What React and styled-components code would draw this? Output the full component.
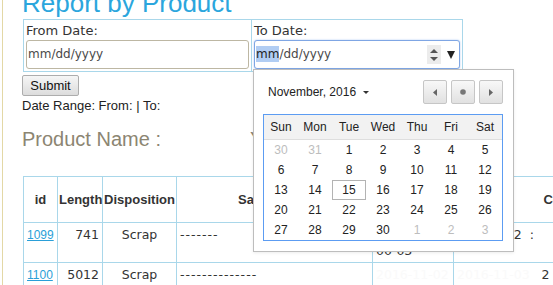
import React from 'react';
import styled, { createGlobalStyle } from 'styled-components';

const GlobalStyle = createGlobalStyle`
html, body {
margin: 0;
padding: 0;
background: #fff;
overflow: hidden;
font-family: "Liberation Sans", Arial, sans-serif;
color: #222;
}
`

const Page = styled.div`
position: relative;
margin-left: 2px;
border-left: 1px solid #e3d8a6;
padding-left: 19px;
height: 285px;
overflow: hidden;
`

const Title = styled.h2`
margin: -12px 0 0;
font-size: 26px;
line-height: 30px;
font-weight: normal;
color: #2ba6dd;
white-space: nowrap;
`

const FormTable = styled.table`
border-collapse: collapse;
margin: 1px 0 0 1px;
`

const FormCell = styled.td`
border: 1px solid #a9d7ea;
padding: 3px 2px 2px;
width: ${props => props.$width}px;
vertical-align: top;
`

const Label = styled.div`
font-family: "DejaVu Sans", Verdana, sans-serif;
font-size: 13px;
line-height: 16px;
color: #333;
`

const DateField = styled.div`
box-sizing: border-box;
display: flex;
align-items: center;
margin-top: 1px;
width: ${props => props.$width}px;
height: 29px;
padding: 0 4px 2px 1px;
border: 1px solid ${props => props.$focused ? '#7fa6e4' : '#bdb7a3'};
border-radius: 3px;
box-shadow: ${props => props.$focused ? '0 0 2px #a9c7f2' : 'none'};
background: #fff;
font-family: "DejaVu Sans", Verdana, sans-serif;
font-size: 12px;
line-height: 14px;
color: #4a4a4a;
`

const FieldText = styled.span`
flex: 1;
white-space: nowrap;
`

const Highlight = styled.span`
display: inline-block;
background: #b1cdf3;
color: #222;
line-height: 16px;
`

const SpinBox = styled.div`
display: flex;
flex-direction: column;
align-items: center;
justify-content: center;
gap: 4px;
width: 14px;
height: 19px;
margin-top: 2px;
background: #ececec;
`

const SpinArrow = styled.span`
width: 0;
height: 0;
border-left: 4px solid transparent;
border-right: 4px solid transparent;
${props => props.$up ? 'border-bottom: 4px solid #555;' : 'border-top: 4px solid #555;'}
`

const DropArrow = styled.span`
width: 0;
height: 0;
margin: 2px 0 0 6px;
border-left: 4px solid transparent;
border-right: 4px solid transparent;
border-top: 8px solid #222;
`

const SubmitButton = styled.button`
display: block;
box-sizing: border-box;
margin-top: 3px;
width: 57px;
height: 21px;
padding: 0;
border: 1px solid #adadad;
border-radius: 2px;
background: linear-gradient(#f6f6f6, #dcdcdc);
font-family: "Liberation Sans", Arial, sans-serif;
font-size: 13px;
color: #111;
`

const RangeText = styled.div`
margin-top: 2px;
font-size: 13px;
line-height: 15px;
color: #222;
`

const ProductRow = styled.div`
display: flex;
margin-top: 15px;
font-size: 20px;
line-height: 23px;
color: #8c8572;
white-space: nowrap;
`

const ProductExtra = styled.span`
margin-left: 89px;
`

const DataTable = styled.table`
border-collapse: collapse;
table-layout: fixed;
margin: 25px 0 0 1px;
width: 677px;
`

const HeadCell = styled.th`
border: 1px solid #a9d7ea;
height: 45px;
padding: 0 1px;
font-size: 13px;
font-weight: bold;
color: #333;
text-align: center;
vertical-align: middle;
white-space: nowrap;
overflow: hidden;
`

const BodyCell = styled.td`
border: 1px solid #a9d7ea;
height: 40px;
padding: 4px 3px 0;
box-sizing: border-box;
font-family: "DejaVu Sans", Verdana, sans-serif;
font-size: 12.5px;
line-height: 16px;
color: #333;
text-align: ${props => props.$align || 'left'};
vertical-align: top;
white-space: pre;
overflow: hidden;
`

const Dashes = styled.span`
letter-spacing: 1px;
`

const Faint = styled.span`
color: #fafafa;
`

const IdLink = styled.a`
font-family: "Liberation Sans", Arial, sans-serif;
font-size: 12px;
color: #2a9fd8;
text-decoration: underline;
`

const Popup = styled.div`
position: absolute;
left: 250px;
top: 69px;
box-sizing: border-box;
width: 261px;
padding: 10px 10px 10px 9px;
border: 1px solid #bdbdbd;
background: #fff;
box-shadow: 0 1px 3px rgba(0,0,0,0.08);
font-family: "Liberation Sans", Arial, sans-serif;
`

const PopHeader = styled.div`
display: flex;
align-items: center;
height: 24px;
`

const MonthTitle = styled.div`
display: flex;
align-items: center;
flex: 1;
margin-left: 5px;
font-size: 12px;
line-height: 14px;
color: #222;
`

const Caret = styled.span`
width: 0;
height: 0;
margin-left: 7px;
border-left: 3px solid transparent;
border-right: 3px solid transparent;
border-top: 3px solid #333;
`

const NavGroup = styled.div`
display: flex;
gap: 4px;
`

const NavButton = styled.div`
box-sizing: border-box;
display: flex;
align-items: center;
justify-content: center;
width: 24px;
height: 24px;
border: 1px solid #c6c6c6;
border-radius: 2px;
background: linear-gradient(#f8f8f8, #e1e1e1);
`

const Grid = styled.div`
display: grid;
grid-template-columns: repeat(7, 34px);
margin-top: 10px;
border: 1px solid #5c9cf2;
width: 238px;
`

const DayHead = styled.div`
height: 24px;
line-height: 24px;
border-bottom: 1px solid #dedede;
background: #f2f2f2;
text-align: center;
font-size: 12px;
color: #222;
`

const Day = styled.div`
box-sizing: border-box;
height: 20px;
line-height: ${props => props.$today ? '18px' : '20px'};
text-align: center;
font-size: 12px;
color: ${props => props.$muted ? '#bdbdbd' : '#222'};
border: ${props => props.$today ? '1px solid #b3b3b3' : 'none'};
`

const weekdays = ['Sun', 'Mon', 'Tue', 'Wed', 'Thu', 'Fri', 'Sat'];

const days = [
    { n: 30, muted: true }, { n: 31, muted: true },
    ...Array.from({ length: 30 }, (_, i) => ({ n: i + 1 })),
    { n: 1, muted: true }, { n: 2, muted: true }, { n: 3, muted: true },
];

const rows = [
    { id: '1099', length: '741', disp: 'Scrap', sales: '-------', date: ['2016-11-15', '00-03'], extra: '2016-11-2  :' },
    { id: '1100', length: '5012', disp: 'Scrap', sales: '--------------', date: null, extra: null },
];

function Calendar() {
    return (
        <Popup>
            <PopHeader>
                <MonthTitle>
                    November, 2016
                    <Caret />
                </MonthTitle>
                <NavGroup>
                    <NavButton>
                        <svg width="4" height="7" viewBox="0 0 4 7"><path d="M4 0 L0 3.5 L4 7 Z" fill="#666" /></svg>
                    </NavButton>
                    <NavButton>
                        <svg width="6" height="6" viewBox="0 0 6 6"><circle cx="3" cy="3" r="2.8" fill="#777" /></svg>
                    </NavButton>
                    <NavButton>
                        <svg width="4" height="7" viewBox="0 0 4 7"><path d="M0 0 L4 3.5 L0 7 Z" fill="#666" /></svg>
                    </NavButton>
                </NavGroup>
            </PopHeader>
            <Grid>
                {weekdays.map(d => <DayHead key={d}>{d}</DayHead>)}
                {days.map((d, i) => (
                    <Day key={i} $muted={d.muted} $today={!d.muted && d.n === 15}>{d.n}</Day>
                ))}
            </Grid>
        </Popup>
    )
}

export default function App() {
    return (
        <>
            <GlobalStyle />
            <Page>
                <Title>Report by Product</Title>
                <FormTable>
                    <tbody>
                        <tr>
                            <FormCell $width={222}>
                                <Label>From Date:</Label>
                                <DateField $width={223}>
                                    <FieldText>mm/dd/yyyy</FieldText>
                                </DateField>
                            </FormCell>
                            <FormCell $width={203}>
                                <Label>To Date:</Label>
                                <DateField $width={206} $focused>
                                    <FieldText><Highlight>mm</Highlight>/dd/yyyy</FieldText>
                                    <SpinBox>
                                        <SpinArrow $up />
                                        <SpinArrow />
                                    </SpinBox>
                                    <DropArrow />
                                </DateField>
                            </FormCell>
                        </tr>
                    </tbody>
                </FormTable>
                <SubmitButton type="button">Submit</SubmitButton>
                <RangeText>Date Range: From: | To:</RangeText>
                <ProductRow>
                    Product Name :
                    <ProductExtra>Y</ProductExtra>
                </ProductRow>
                <DataTable>
                    <colgroup>
                        <col style={{ width: 34 }} />
                        <col style={{ width: 45 }} />
                        <col style={{ width: 74 }} />
                        <col style={{ width: 196 }} />
                        <col style={{ width: 81 }} />
                        <col style={{ width: 247 }} />
                    </colgroup>
                    <thead>
                        <tr>
                            <HeadCell>id</HeadCell>
                            <HeadCell>Length</HeadCell>
                            <HeadCell>Disposition</HeadCell>
                            <HeadCell>Sales Order</HeadCell>
                            <HeadCell>Date</HeadCell>
                            <HeadCell>Comments</HeadCell>
                        </tr>
                    </thead>
                    <tbody>
                        {rows.map(r => (
                            <tr key={r.id}>
                                <BodyCell><IdLink href="#">{r.id}</IdLink></BodyCell>
                                <BodyCell $align="right">{r.length}</BodyCell>
                                <BodyCell $align="center">{r.disp}</BodyCell>
                                <BodyCell><Dashes>{r.sales}</Dashes></BodyCell>
                                <BodyCell>
                                    {r.date ? <>{r.date[0]}<br />{r.date[1]}</> : <Faint>2016-11-02</Faint>}
                                </BodyCell>
                                <BodyCell>{r.extra || <><Faint>2016-11-03   </Faint>2</>}</BodyCell>
                            </tr>
                        ))}
                    </tbody>
                </DataTable>
                <Calendar />
            </Page>
        </>
    )
}
